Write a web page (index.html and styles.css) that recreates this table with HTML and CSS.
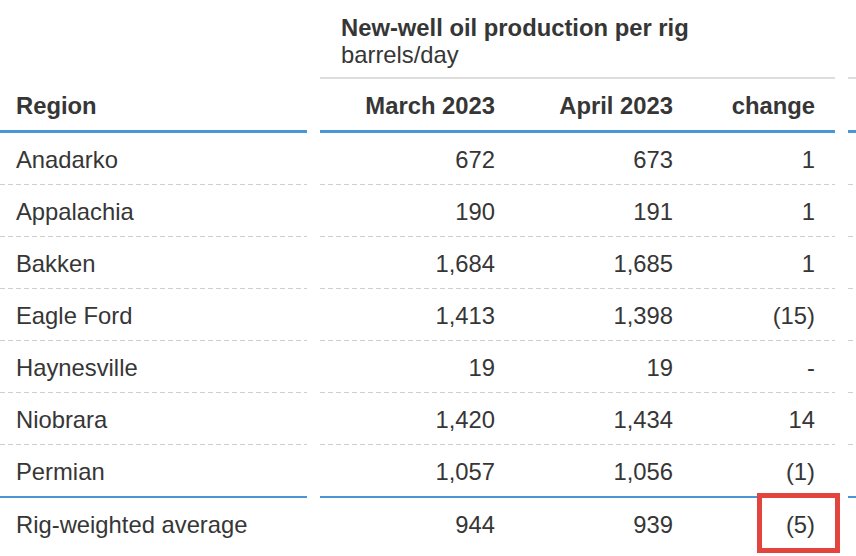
FILE: index.html
```html
<!DOCTYPE html>
<html lang="en">
<head>
<meta charset="utf-8">
<title>New-well oil production per rig</title>
<link rel="stylesheet" href="styles.css">
</head>
<body>
<div class="table">
  <div class="row head1">
    <div class="seg region"></div>
    <div class="seg group">
      <div class="title">New-well oil production per rig</div>
      <div class="unit">barrels/day</div>
    </div>
    <div class="seg extra"></div>
  </div>
  <div class="row head2">
    <div class="seg region"><span class="cell name">Region</span></div>
    <div class="seg group">
      <span class="cell c1">March 2023</span>
      <span class="cell c2">April 2023</span>
      <span class="cell c3">change</span>
    </div>
    <div class="seg extra"></div>
  </div>
  <div class="row data">
    <div class="seg region"><span class="cell name">Anadarko</span></div>
    <div class="seg group"><span class="cell c1">672</span><span class="cell c2">673</span><span class="cell c3">1</span></div>
    <div class="seg extra"></div>
  </div>
  <div class="row data">
    <div class="seg region"><span class="cell name">Appalachia</span></div>
    <div class="seg group"><span class="cell c1">190</span><span class="cell c2">191</span><span class="cell c3">1</span></div>
    <div class="seg extra"></div>
  </div>
  <div class="row data">
    <div class="seg region"><span class="cell name">Bakken</span></div>
    <div class="seg group"><span class="cell c1">1,684</span><span class="cell c2">1,685</span><span class="cell c3">1</span></div>
    <div class="seg extra"></div>
  </div>
  <div class="row data">
    <div class="seg region"><span class="cell name">Eagle Ford</span></div>
    <div class="seg group"><span class="cell c1">1,413</span><span class="cell c2">1,398</span><span class="cell c3">(15)</span></div>
    <div class="seg extra"></div>
  </div>
  <div class="row data">
    <div class="seg region"><span class="cell name">Haynesville</span></div>
    <div class="seg group"><span class="cell c1">19</span><span class="cell c2">19</span><span class="cell c3">-</span></div>
    <div class="seg extra"></div>
  </div>
  <div class="row data">
    <div class="seg region"><span class="cell name">Niobrara</span></div>
    <div class="seg group"><span class="cell c1">1,420</span><span class="cell c2">1,434</span><span class="cell c3">14</span></div>
    <div class="seg extra"></div>
  </div>
  <div class="row data last">
    <div class="seg region"><span class="cell name">Permian</span></div>
    <div class="seg group"><span class="cell c1">1,057</span><span class="cell c2">1,056</span><span class="cell c3">(1)</span></div>
    <div class="seg extra"></div>
  </div>
  <div class="row total">
    <div class="seg region"><span class="cell name">Rig-weighted average</span></div>
    <div class="seg group"><span class="cell c1">944</span><span class="cell c2">939</span><span class="cell c3">(5)</span></div>
    <div class="seg extra"></div>
  </div>
</div>
<div class="highlight"></div>
</body>
</html>
```

FILE: styles.css
```css
html, body {
  margin: 0;
  padding: 0;
  background: #ffffff;
}

body {
  width: 856px;
  height: 556px;
  overflow: hidden;
  position: relative;
  font-family: "Liberation Sans", Arial, sans-serif;
  font-size: 23.8px;
  color: #363636;
}

.table {
  display: flex;
  flex-direction: column;
}

.row {
  display: flex;
  gap: 13px;
}

.seg {
  display: flex;
  align-items: center;
}

.region {
  width: 307px;
  flex: none;
}

.group {
  width: 515px;
  flex: none;
}

.extra {
  flex: 1;
}

.cell {
  display: block;
  white-space: nowrap;
  padding-top: 2px;
}

.name {
  padding-left: 16px;
}

.c1, .c2, .c3 {
  text-align: right;
  padding-right: 20px;
  box-sizing: border-box;
}

.c1 { width: 195px; }
.c2 { width: 178px; }
.c3 { width: 142px; }

/* group header */
.head1 .seg {
  height: 77px;
}

.head1 .group,
.head1 .extra {
  border-bottom: 2px solid #dddddd;
}

.head1 .group {
  flex-direction: column;
  align-items: flex-start;
  justify-content: flex-start;
  padding-top: 14px;
  box-sizing: border-box;
  height: 79px;
}

.head1 .region {
  height: 79px;
}

.title {
  font-weight: bold;
  line-height: 27px;
  padding-left: 21px;
}

.unit {
  line-height: 27px;
  padding-left: 21px;
}

/* column header */
.head2 .seg {
  height: 51px;
  border-bottom: 3px solid #4a95d5;
  font-weight: bold;
}

/* body rows */
.data .seg {
  height: 51px;
  padding-bottom: 1px;
  background: repeating-linear-gradient(90deg, #cfcfcf 0 5px, transparent 5px 8px) left bottom / 100% 1px no-repeat;
}

.data.last .seg {
  padding-bottom: 0;
  background: none;
}

.total .seg {
  height: 52px;
  border-top: 2px solid #4a95d5;
}

.highlight {
  position: absolute;
  left: 757px;
  top: 493px;
  width: 73px;
  height: 50px;
  border: 5px solid #e4443e;
}
```
